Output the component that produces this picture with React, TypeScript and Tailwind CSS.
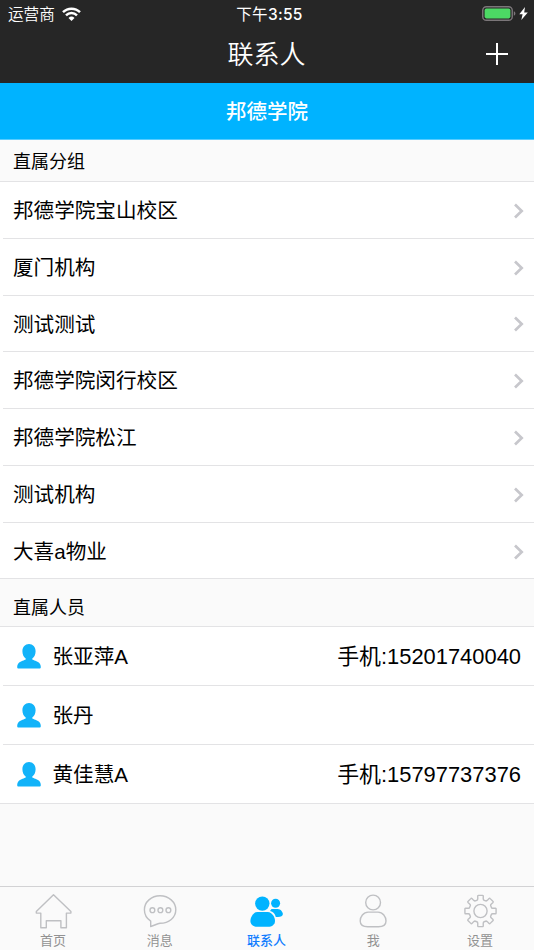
import React from "react";

const groups = ["邦德学院宝山校区", "厦门机构", "测试测试", "邦德学院闵行校区", "邦德学院松江", "测试机构", "大喜a物业"];

const people = [
  { name: "张亚萍A", phone: "手机:15201740040" },
  { name: "张丹", phone: "" },
  { name: "黄佳慧A", phone: "手机:15797737376" },
];

// Outline of an eight-toothed cog centred on the origin.
const gearPath = (() => {
  const pts: string[] = [];
  const at = (r: number, deg: number) => {
    const a = (deg * Math.PI) / 180;
    return `${(r * Math.cos(a)).toFixed(2)} ${(r * Math.sin(a)).toFixed(2)}`;
  };
  for (let i = 0; i < 8; i++) {
    const c = i * 45 - 90;
    pts.push(`${i === 0 ? "M" : "L"}${at(11.6, c - 15)}`);
    pts.push(`L${at(12.6, c - 12.5)}L${at(15.2, c - 10.5)}Q${at(15.9, c - 10)} ${at(15.7, c - 7)}`);
    pts.push(`L${at(15.7, c + 7)}Q${at(15.9, c + 10)} ${at(15.2, c + 10.5)}L${at(12.6, c + 12.5)}`);
    pts.push(`L${at(11.6, c + 15)}Q${at(11.2, c + 22.5)} ${at(11.6, c + 30)}`);
  }
  return pts.join("") + "Z";
})();

function StatusBar() {
  return (
    <div className="grid h-[27px] grid-cols-3 items-center pl-2 pr-[6px] text-white">
      <div className="flex items-center gap-[7px]">
        <span className="pt-px text-[15.6px] leading-[27px] font-[350]">运营商</span>
        <svg width="19" height="14" viewBox="0 0 19 14" fill="none" stroke="#fff" strokeWidth="2.5" className="-mt-px">
          <path d="M1 5.200a12.100 12.100 0 0 1 17 0" />
          <path d="M4 8.300a7.900 7.900 0 0 1 11 0" />
          <path d="M6.500 10.900a4.400 4.400 0 0 1 6 0L9.500 13.900Z" fill="#fff" stroke="none" />
        </svg>
      </div>
      <div className="pl-[3px] text-center text-[15.5px] font-medium leading-[27px] tracking-[0.3px] font-['Inter','Noto_Sans_CJK_SC',sans-serif]"><span className="font-normal">下午</span>3:55</div>
      <div className="-mt-px flex items-center justify-end gap-[3px]">
        <svg width="34" height="15" viewBox="0 0 34 15">
          <rect x="0.75" y="0.75" width="29.5" height="13.5" rx="3.6" fill="none" stroke="#7b7679" strokeWidth="1.4" />
          <rect x="2.6" y="2.6" width="25.8" height="9.8" rx="1.8" fill="#4cd964" />
          <path d="M31.800 5.200q1.600 .6 1.600 2.300t-1.600 2.300Z" fill="#7b7679" />
        </svg>
        <svg width="9" height="13" viewBox="0 0 9 13" fill="#fff">
          <path d="M6 0 .3 7.300h3.300L2.300 13 8.800 5.400H5.200Z" />
        </svg>
      </div>
    </div>
  );
}

function PersonIcon() {
  return (
    <svg width="24" height="25" viewBox="0 0 24 25" fill="#12b3f9">
      <path d="M12 .1C8.200.1 5.400 3 5.400 7.200c0 3.300 1.400 6 3.300 7.300v1C7.600 16.400 3.900 16.800 1.700 19.100.6 20.300.2 22 .2 23.200c0 .9.500 1.400 1.400 1.400h20.800c.9 0 1.400-.5 1.400-1.400 0-1.200-.4-2.900-1.500-4.100-2.200-2.300-5.900-2.700-7-3.600v-1c1.900-1.300 3.300-4 3.300-7.300C18.600 3 15.800.1 12 .1Z" />
    </svg>
  );
}

function Tab({ label, active = false, children }: { label: string; active?: boolean; children: React.ReactNode }) {
  return (
    <div className="flex flex-1 flex-col items-center">
      <svg width="40" height="40" viewBox="-20 -20 40 40" className="mt-[4px] shrink-0" fill="none" stroke="#bfc0c3" strokeWidth="1.4" strokeLinejoin="round">
        {children}
      </svg>
      <span className={active ? "pr-px text-[13px] leading-5 font-medium text-[#117dff]" : "pr-px text-[13px] leading-5 text-[#929292]"}>{label}</span>
    </div>
  );
}

export default function App() {
  return (
    <div className="flex h-[950px] w-[534px] flex-col overflow-hidden bg-[#fafafa] text-black font-['Liberation_Sans','Noto_Sans_CJK_SC',sans-serif]">
      <header className="h-[83px] shrink-0 bg-[#262626]">
        <StatusBar />
        <div className="grid h-[56px] grid-cols-[1fr_auto_1fr] items-center text-white">
          <span />
          <h1 className="pr-px text-[26px] font-[350] leading-none">联系人</h1>
          <svg width="24" height="24" viewBox="0 0 24 24" stroke="#fff" strokeWidth="2" className="mr-[25px] -mt-[2px] justify-self-end">
            <path d="M12 1v22M1 12h22" />
          </svg>
        </div>
      </header>
      <div className="flex h-[57px] shrink-0 items-center justify-center border-b border-[#58ccff] bg-[#00b3ff] pt-[3px] text-[20.5px] font-medium text-white">邦德学院</div>
      <div className="flex h-[42px] shrink-0 items-center border-b border-[#e3e3e5] pl-[13px] pt-[4px] text-[18px]">直属分组</div>
      <ul className="shrink-0 border-b border-[#e3e3e5] bg-white pl-[3px]">
        {groups.map((g, i) => (
          <li key={g} className={`flex items-center justify-between pl-[10px] pr-[10px] text-[20.6px] leading-none ${i < 6 ? "h-[56.8px] border-b border-[#e3e3e5]" : "h-[55.7px]"}`}>
            <span className="pt-[3px]">{g}</span>
            <svg width="11" height="16" viewBox="0 0 11 16" fill="none" stroke="#c7c7cc" strokeWidth="2.7" className="mt-[2px]">
              <path d="m2 1.500 6.700 6.500L2 14.500" />
            </svg>
          </li>
        ))}
      </ul>
      <div className="flex h-[48px] shrink-0 items-center border-b border-[#e3e3e5] pl-[13px] pt-[11px] text-[18px]">直属人员</div>
      <ul className="shrink-0 border-b border-[#e3e3e5] bg-white pl-[3px]">
        {people.map((p, i) => (
          <li key={p.name} className={`flex items-center pl-[14px] pr-[13px] leading-none ${i < 2 ? "h-[59px] border-b border-[#e3e3e5]" : "h-[58px]"}`}>
            <PersonIcon />
            <span className="ml-[11.5px] flex-1 pt-[2px] text-[20.6px]">{p.name}</span>
            <span className="text-[21.9px]">{p.phone}</span>
          </li>
        ))}
      </ul>
      <nav className="mt-auto flex h-[64px] shrink-0 border-t border-[#d2d2d4] bg-[#fafafa]">
        <Tab label="首页">
          <path d="M.5-16.200-16.700.6v1.500h4.500V16.800h5.500V9.800H7.900v7h5.500V2.100h4.500V.6Z" />
        </Tab>
        <Tab label="消息">
          <path d="M-9.300 10.200C-13.300 7.500-15.600 3.500-15.600-1.200-15.600-9-8.700-15.200 0-15.200S15.800-9 15.800-1.200 9 12.200 0 12.200c-3 .5-5.200 2.100-9.300 3.300Z" />
          <circle cx="-7.600" cy="-.8" r="2.400" />
          <circle cx=".4" cy="-.8" r="2.400" />
          <circle cx="8.400" cy="-.8" r="2.400" />
        </Tab>
        <Tab label="联系人" active>
          <g fill="#00b3ff" stroke="none">
            <circle cx="-4.700" cy="-7.400" r="7.200" />
            <circle cx="8.600" cy="-7.800" r="4.500" />
            <path d="M-9.500 1H.8C5.200 1 8 6.500 8 10s-3 5.800-7 5.800H-9.600c-4.300 0-7-2.400-7-5.800S-14 1-9.500 1Z" />
            <path d="M4.500-2H10.700c3 0 5.200 3.200 5.200 5.100S13.800 6 11 6H8.800C8 3.200 6.200.6 3 .1Z" />
          </g>
        </Tab>
        <Tab label="我">
          <circle cx="-.9" cy="-8.500" r="7.400" />
          <path d="M-5.800 1.100H4C8.900 1.100 12 6 12 10s-3.100 5.800-7.600 5.800H-6.200c-4.500 0-7.600-1.800-7.600-5.800S-10.700 1.100-5.800 1.100Z" />
        </Tab>
        <Tab label="设置">
          <g transform="translate(-.5 0)">
            <path d={gearPath} />
            <circle r="6.600" />
          </g>
        </Tab>
      </nav>
    </div>
  );
}
